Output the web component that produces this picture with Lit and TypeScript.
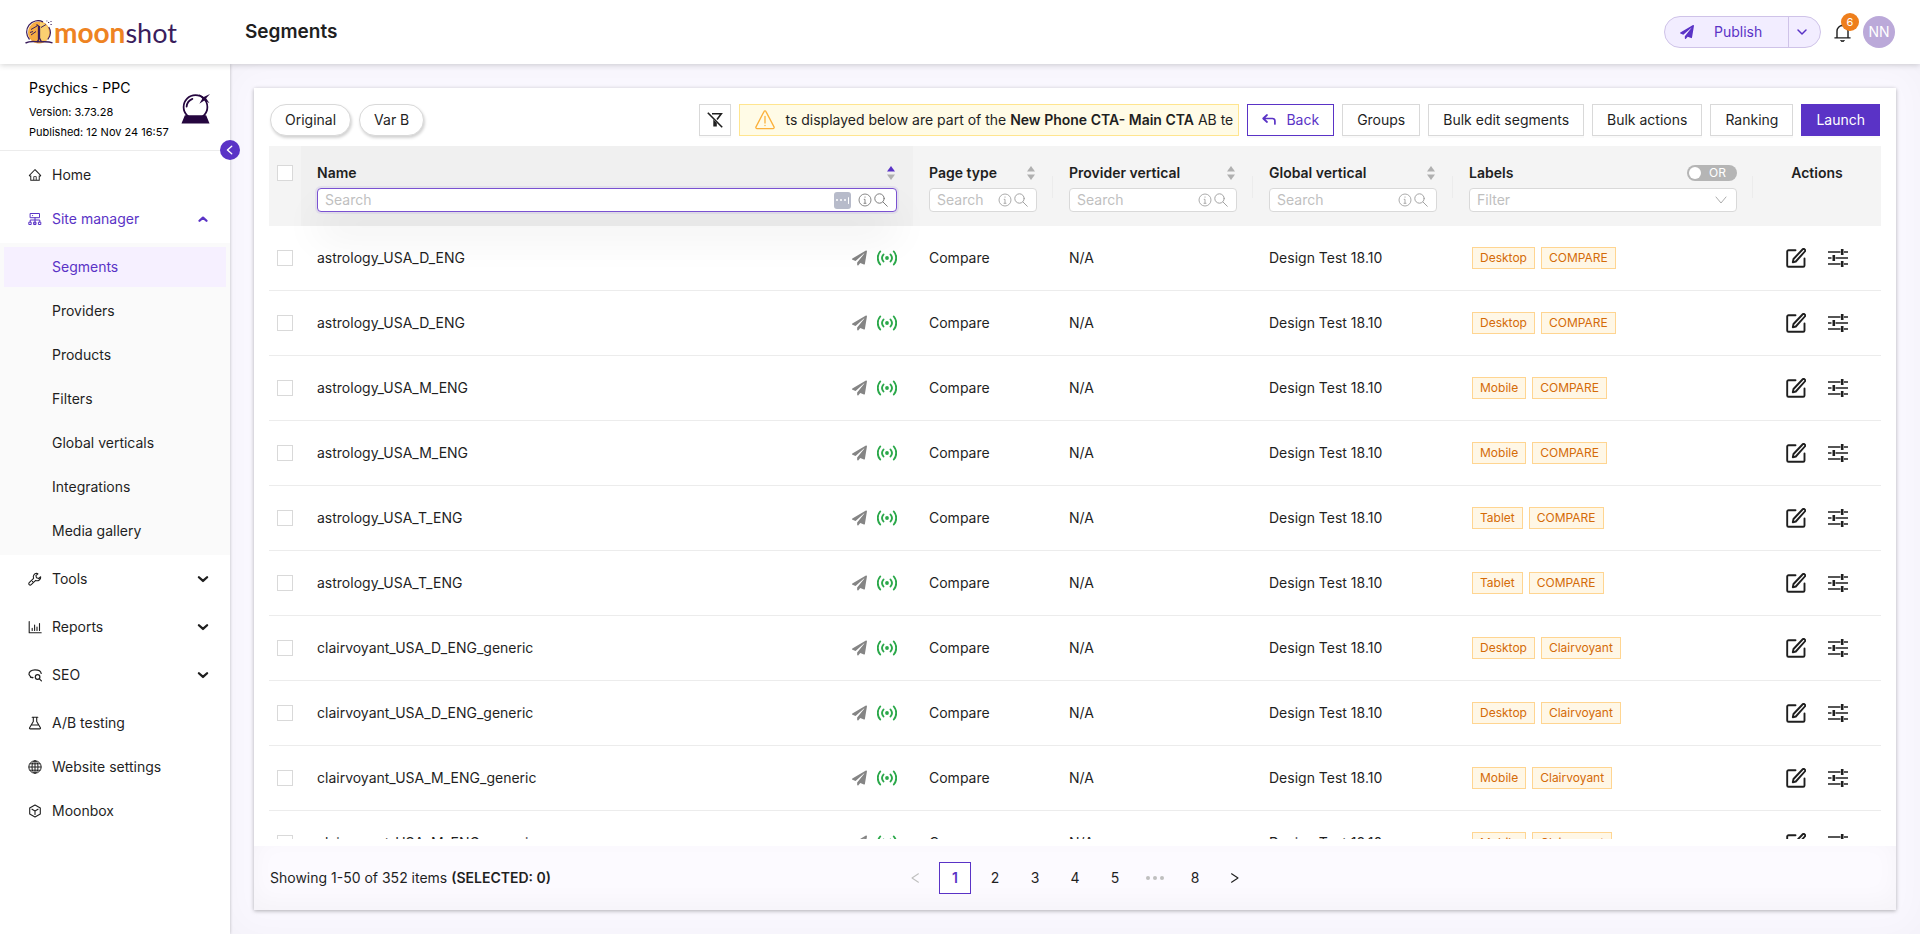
import { LitElement, html, css, nothing, type TemplateResult } from "lit";
import { customElement, state } from "lit/decorators.js";
import { classMap } from "lit/directives/class-map.js";

const stroke = (d: string, w = 2, box = 24) => html`<svg viewBox="0 0 ${box} ${box}" fill="none" stroke="currentColor"
  stroke-width=${w} stroke-linecap="round" stroke-linejoin="round" aria-hidden="true"><path d=${d}></path></svg>`;
const solid = (d: string, box = 24) => html`<svg viewBox="0 0 ${box} ${box}" fill="currentColor" aria-hidden="true"><path d=${d}></path></svg>`;

const icons: Record<string, TemplateResult> = {
  home: solid("M946.5 505L560.1 118.8l-25.9-25.9a31.5 31.5 0 0 0-44.4 0L77.5 505a63.9 63.9 0 0 0-18.8 46c.4 35.2 29.7 63.3 64.9 63.3h42.5V940h691.8V614.3h43.4c17.1 0 33.2-6.7 45.3-18.8a63.6 63.6 0 0 0 18.7-45.3c0-17-6.7-33.1-18.8-45.2zM568 868H456V664h112v204zm217.9-325.7V868H632V640c0-22.1-17.9-40-40-40H432c-22.1 0-40 17.9-40 40v228H238.1V542.3h-96l370-369.7 23.1 23.1L882 542.3h-96.1z", 1024),
  site: stroke("M2.5 1.5h9v4.2h-9zM4.5 3.6h.2M7 5.7v7M2.2 10V8h9.6v2M1.2 10.2h2v2.3h-2zM6 10.2h2v2.3H6zM10.8 10.2h2v2.3h-2z", 1, 14),
  tools: stroke("M8.6 1.3a3.6 3.6 0 0 0-3 5L1.2 10.7a1.3 1.3 0 0 0 2 2L7.7 8.4a3.6 3.6 0 0 0 5-3.7l-2 1.8-2.2-.7-.6-2.2 2-1.8zM4.5 9.500l.2.2", 1.1, 14),
  reports: stroke("M1.2 1.5v11.3h12M4.2 10.5V8.2M6.6 10.5V5M9 10.5V7M11.5 10.5V3.5", 1.1, 14),
  seo: html`<svg viewBox="0 0 14 14" fill="none" stroke="currentColor" stroke-width="1.2" stroke-linecap="round" aria-hidden="true"><path d="M5 9.6 2.8 9 1 6.5C.7 4 3 1.8 7 1.8s6 1.8 6.200 3.7"></path><circle cx="9.6" cy="9" r="2.3"></circle><path d="m11.4 10.8 2 2M2.5 9.2l1.7.6"></path></svg>`,
  flask: stroke("M4.2 1.2h5.6M5.3 1.2v4.3L1.6 11.7c-.3.6 0 1.2.7 1.2h9.4c.7 0 1-.6.7-1.2L8.7 5.5V1.2M3.5 9h6.8", 1.1, 14),
  globe: html`<svg viewBox="0 0 14 14" fill="none" stroke="currentColor" stroke-width="1" aria-hidden="true"><circle cx="7" cy="7" r="6.2"></circle><ellipse cx="7" cy="7" rx="3" ry="6.2"></ellipse><path d="M7 .8v12.4M.8 7h12.4M1.7 3.8h10.6M1.7 10.2h10.6"></path></svg>`,
  cube: stroke("M7 1 12.3 3.9v6.2L7 13 1.7 10.1V3.9zM4 5.2 7 7l3-1.8M7 7v3.500M5.2 2l-3.500 2M8.8 2l3.5 2", 1.1, 14),
  chevDown: stroke("M2.5 4.5 6 7.7l3.5-3.2", 2, 12),
  chevThin: stroke("M2 4 6 8l4-4", 1.5, 12),
  chevUp: stroke("M3 7.5 6 4.8l3 2.7", 2, 12),
  thinDown: stroke("M2 4l5 6 5-6", 0.9, 14),
  left: stroke("M9 2.5 4 7l5 4.5", 1.6, 14),
  plane: solid("M476 3.2L12.5 270.6c-18.1 10.4-15.8 35.6 2.2 43.2L121 358.4l287.3-253.2c5.5-4.9 13.3 2.6 8.6 8.3L176 407v80.5c0 23.6 28.5 32.9 42.5 15.8L282 426l124.6 52.2c14.2 6 30.4-2.9 33-18.2l72-432C515 7.800 493.3-6.8 476 3.2z", 512),
  bell: html`<svg viewBox="0 0 20 20" fill="none" stroke="currentColor" stroke-width="1.5" aria-hidden="true"><path d="M1.5 16.2h17M4.2 16V9a5.8 5.8 0 0 1 11.600 0v7M10 3.2V1.5"></path><path d="M8 18.6a2 1.4 0 0 0 4 0" fill="currentColor" stroke-width="1"></path></svg>`,
  funnelOff: html`<svg viewBox="0 0 16 16" fill="none" stroke="currentColor" stroke-width="1.6" aria-hidden="true"><path d="M5 1.8h9.300L10 7.5"></path><path d="M5.800 7 9.800 11v3.500H6.300V7z" fill="currentColor" stroke="none"></path><path d="M.8.8l14.400 14.400"></path></svg>`,
  warn: html`<svg viewBox="0 0 20 20" fill="none" stroke="currentColor" stroke-width="1.3" stroke-linecap="round" stroke-linejoin="round" aria-hidden="true"><path d="M9 1.600a1.100 1.100 0 0 1 2 0l8 15.300c.4.8 0 1.700-1 1.700H2c-1 0-1.400-.9-1-1.700z"></path><path d="M10 6.500v6.500"></path><path d="M10 15.300v.3"></path></svg>`,
  back: stroke("M5 2 1.2 5.5 5 9M1.5 5.500h9a2.4 2.4 0 0 1 2.4 2.4V11", 1.7, 14),
  info: html`<svg viewBox="0 0 14 14" fill="none" stroke="currentColor" stroke-width="0.9" aria-hidden="true"><circle cx="7" cy="7" r="6"></circle><path d="M7 6.300v4M5.800 6.300h1.200M5.600 10.300h2.800M7 3.500v1.200"></path></svg>`,
  search: html`<svg viewBox="0 0 14 14" fill="none" stroke="currentColor" stroke-width="1" stroke-linecap="round" aria-hidden="true"><circle cx="5.500" cy="5.500" r="4.700"></circle><path d="m9 9 4.300 4.300"></path></svg>`,
  live: html`<svg viewBox="0 0 20 16" fill="none" stroke="currentColor" stroke-width="1.9" stroke-linecap="round" aria-hidden="true"><path d="M3.200 1.500a10 10 0 0 0 0 13M16.800 1.500a10 10 0 0 1 0 13M6.500 4.500a5.400 5.400 0 0 0 0 7M13.500 4.500a5.400 5.400 0 0 1 0 7"></path><circle cx="10" cy="8" r="1.9" fill="currentColor" stroke="none"></circle></svg>`,
  edit: stroke("M9.500 2.200H2.500a1.300 1.300 0 0 0-1.300 1.300v14a1.300 1.300 0 0 0 1.300 1.300h14.700a1.300 1.300 0 0 0 1.300-1.300V10.500M16.500 1.500a1.500 1.500 0 0 1 2.300 2L9.800 13.500 6.800 14.300 7.500 11z", 1.9, 20),
  sliders: html`<svg viewBox="0 0 20 20" fill="none" stroke="currentColor" stroke-width="1.600" aria-hidden="true"><path d="M0 4h12.500M16 4h4M0 10h3.500M7.500 10H20M0 16h12.500M16 16h4"></path><path d="M14.200 1v6M5.800 7v6M14.200 13v6" stroke-width="2.600"></path></svg>`,
  pagePrev: stroke("M11 2 3.500 7l7.500 5", 1.2, 14),
  pageNext: stroke("M3 2l7.500 5L3 12", 1.3, 14),
  ball: html`<svg viewBox="0 0 30 32" aria-hidden="true"><circle cx="15" cy="14" r="12.300" fill="#fff" stroke="#25063f" stroke-width="1.800"></circle><path d="M5.800 13.500a9.500 9.500 0 0 1 6-8" fill="none" stroke="#25063f" stroke-width="1.800" stroke-linecap="round"></path><path d="M4 22.500h22L29.500 31H.5z" fill="#25063f"></path><path d="m18.500.5 5 3L30 .5l-4 4.500 3.500 5-5-3-5.500 3.500 3-5z" fill="#25063f"></path></svg>`,
  moon: html`<svg viewBox="0 0 28 24" aria-hidden="true"><circle cx="14" cy="12.500" r="11" fill="#f6ac42"></circle><path d="M15 2a11 11 0 0 1 6 18.500h-6z" fill="#fbd071"></path><path d="M4.500 19.500A11.300 11.300 0 0 1 18 1.900M23.800 7a11.300 11.300 0 0 1-1 12.500" fill="none" stroke="#3a1d5c" stroke-width="1.200"></path><path d="M11.500 4.500 13.500 6v14L12 22M14.500 6v12l2 4" fill="none" stroke="#3a1d5c" stroke-width="1.300"></path><path d="M6 9.500l6-3.500M6 15l5-3.500M16 7.500l5-3M5 12.500l3-1" fill="none" stroke="#3a1d5c" stroke-width="1"></path><path d="M.5 23c5-2.500 8-1.500 13-1.200s9-.8 14 1" fill="none" stroke="#3a1d5c" stroke-width="1.400"></path><path d="M23 2.500h1.200M26 1v1M25.500 4.500h1.200M21.500 1h.8" stroke="#3a1d5c" stroke-width="1"></path></svg>`,
};

@customElement("top-bar")
class TopBar extends LitElement {
  static styles = css`
    :host { display: flex; align-items: center; height: 64px; flex: none; background: #fff; box-shadow: 0 1px 6px rgba(0, 0, 0, .18); position: relative; z-index: 3; }
    .brand { display: flex; align-items: center; gap: 1px; width: 245px; box-sizing: border-box; padding-left: 25px; text-decoration: none; font: 28px/32px Lato, sans-serif; color: #3a1d5c; }
    .brand svg { width: 28px; height: 24px; }
    .brand b { color: #ee8322; font-weight: 700; }
    .brand i { font-style: normal; font-size: 27px; }
    h1 { flex: 1; margin: 0; font-size: 19px; line-height: 28px; font-weight: 600; }
    .publish { display: flex; height: 32px; box-sizing: border-box; border: 1px solid #cfc3e8; border-radius: 16px; background: #f2edff; overflow: hidden; }
    button { font: inherit; color: #5a33c6; background: none; border: 0; padding: 0; cursor: pointer; display: flex; align-items: center; }
    .main { width: 123px; padding-left: 15px; gap: 20px; }
    .main svg { width: 14px; height: 14px; }
    .more { width: 32px; padding-right: 5px; justify-content: center; border-left: 1px solid #cfc3e8; }
    .more svg { width: 12px; height: 12px; }
    .bell { position: relative; margin-left: 12px; color: #1f1f1f; }
    .bell svg { width: 19px; height: 20px; }
    .count { position: absolute; top: -9px; right: -7px; width: 18px; height: 18px; border-radius: 9px; background: #ee7f1d; color: #fff; font-size: 11px; line-height: 18px; text-align: center; }
    .avatar { width: 32px; height: 32px; margin: 0 25px 0 11px; border-radius: 50%; background: #bba9d9; color: #fff; justify-content: center; }
  `;
  render() {
    return html`
      <a class="brand" href="#" aria-label="moonshot">${icons.moon}<span><b>moon</b><i>shot</i></span></a>
      <h1>Segments</h1>
      <div class="publish">
        <button class="main">${icons.plane}<span>Publish</span></button>
        <button class="more" aria-label="More publish options">${icons.chevThin}</button>
      </div>
      <button class="bell" aria-label="Notifications">${icons.bell}<span class="count">6</span></button>
      <button class="avatar">NN</button>`;
  }
}

interface NavItem { label: string; icon: string; group?: boolean; open?: boolean; children?: string[] }

const nav: NavItem[] = [
  { label: "Home", icon: "home" },
  { label: "Site manager", icon: "site", group: true, open: true, children: ["Segments", "Providers", "Products", "Filters", "Global verticals", "Integrations", "Media gallery"] },
  { label: "Tools", icon: "tools", group: true },
  { label: "Reports", icon: "reports", group: true },
  { label: "SEO", icon: "seo", group: true },
  { label: "A/B testing", icon: "flask" },
  { label: "Website settings", icon: "globe" },
  { label: "Moonbox", icon: "cube" },
];

@customElement("side-nav")
class SideNav extends LitElement {
  static styles = css`
    :host { display: block; width: 230px; flex: none; box-sizing: border-box; background: #fff; position: relative; z-index: 2; box-shadow: 0 0 3px rgba(0, 0, 0, .25); }
    .site { display: flex; align-items: center; justify-content: space-between; height: 87px; box-sizing: border-box; padding: 4px 20px 0 29px; border-bottom: 1px solid #ececec; color: #000; }
    .site h2 { margin: 2px 0 4px; font-size: 14px; line-height: 20px; font-weight: 400; }
    .site p { margin: 0; font-size: 11px; line-height: 20px; }
    .site svg { width: 29px; height: 32px; }
    .fold { position: absolute; top: 76px; right: -10px; width: 20px; height: 20px; border: 0; padding: 0; border-radius: 50%; background: #5a33c6; color: #fff; display: grid; place-items: center; cursor: pointer; }
    .fold svg { width: 12px; height: 12px; }
    nav { display: flex; flex-direction: column; gap: 4px; padding-top: 4px; }
    a { display: flex; align-items: center; height: 40px; box-sizing: border-box; padding: 0 20px 0 28px; color: #1f1f1f; text-decoration: none; }
    a svg { width: 14px; height: 14px; margin-right: 10px; }
    a .arrow { margin-left: auto; display: flex; }
    .arrow svg { width: 14px; height: 14px; margin: 0; }
    .closed { margin-bottom: 4px; }
    .open { color: #5a33c6; }
    .sub { display: flex; flex-direction: column; gap: 4px; padding: 4px; background: #fafafa; }
    .sub a { padding: 0 48px; }
    .sub .current { background: #f6f0ff; color: #5a33c6; }
  `;
  render() {
    return html`
      <div class="site">
        <div><h2>Psychics - PPC</h2><p>Version: 3.73.28</p><p>Published: 12 Nov 24 16:57</p></div>
        ${icons.ball}
      </div>
      <button class="fold" aria-label="Collapse menu">${icons.left}</button>
      <nav>${nav.map((n) => html`
        <a href="#" class=${classMap({ closed: !!n.group && !n.open, open: !!n.open })}>${icons[n.icon]}${n.label}
          ${n.group ? html`<span class="arrow">${n.open ? icons.chevUp : icons.chevDown}</span>` : nothing}</a>
        ${n.children ? html`<div class="sub">${n.children.map((c, i) => html`<a href="#" class=${i === 0 ? "current" : ""}>${c}</a>`)}</div>` : nothing}`)}
      </nav>`;
  }
}

const columns = [
  { label: "Name", cls: "name" },
  { label: "Page type", cls: "type" },
  { label: "Provider vertical", cls: "provider" },
  { label: "Global vertical", cls: "global" },
];

const rows: { name: string; labels: string[] }[] = [
  { name: "astrology_USA_D_ENG", labels: ["Desktop", "COMPARE"] },
  { name: "astrology_USA_D_ENG", labels: ["Desktop", "COMPARE"] },
  { name: "astrology_USA_M_ENG", labels: ["Mobile", "COMPARE"] },
  { name: "astrology_USA_M_ENG", labels: ["Mobile", "COMPARE"] },
  { name: "astrology_USA_T_ENG", labels: ["Tablet", "COMPARE"] },
  { name: "astrology_USA_T_ENG", labels: ["Tablet", "COMPARE"] },
  { name: "clairvoyant_USA_D_ENG_generic", labels: ["Desktop", "Clairvoyant"] },
  { name: "clairvoyant_USA_D_ENG_generic", labels: ["Desktop", "Clairvoyant"] },
  { name: "clairvoyant_USA_M_ENG_generic", labels: ["Mobile", "Clairvoyant"] },
  { name: "clairvoyant_USA_M_ENG_generic", labels: ["Mobile", "Clairvoyant"] },
];

@customElement("segment-table")
class SegmentTable extends LitElement {
  static styles = css`
    :host { display: block; flex: 1; min-height: 0; overflow: hidden; }
    table { width: 100%; border-collapse: separate; border-spacing: 0; table-layout: fixed; }
    .c-check { width: 32px; }
    .c-type { width: 140px; }
    .c-vertical { width: 200px; }
    .c-labels { width: 300px; }
    .c-actions { width: 128px; }
    th { height: 80px; box-sizing: border-box; padding: 16px 16px 14px; background: #f4f4f4; text-align: left; vertical-align: top; font-weight: 600; position: relative; }
    th.sorted { background: #f0f0f0; z-index: 1; }
    th.divided::after { content: ""; position: absolute; right: 0; top: 30px; width: 1px; height: 22px; background: #ececec; }
    th.pick, td.pick { padding-left: 8px; padding-right: 8px; }
    th.pick { padding-top: 19px; }
    th.act { text-align: center; }
    .head { display: flex; align-items: center; justify-content: space-between; height: 22px; margin-bottom: 4px; }
    .sort { display: flex; width: 12px; padding: 0; border: 0; background: none; color: #b0b0b0; cursor: pointer; }
    .sort svg { width: 12px; height: 16px; }
    .asc .up { color: #5a33c6; fill: #5a33c6; }
    .field { display: flex; align-items: center; gap: 2px; height: 24px; box-sizing: border-box; padding: 0 8px 0 7px; border: 1px solid #d9d9d9; border-radius: 4px; background: #fff; color: #a3a3a3; }
    .field input { flex: 1; min-width: 0; width: 0; padding: 0; border: 0; outline: 0; background: none; font: inherit; font-weight: 400; color: #1f1f1f; }
    .field input::placeholder { color: #bfbfbf; opacity: 1; }
    .field svg { width: 14px; height: 14px; flex: none; }
    .field.active { color: #7d7d7d; border-color: #7a52d1; box-shadow: 0 0 0 2px rgba(90, 51, 198, .08), 0 24px 40px rgba(0, 0, 0, .07); }
    .dots { display: flex; align-items: center; justify-content: center; gap: 2px; width: 17px; height: 17px; margin-right: 5px; border-radius: 3px; background: #b7bbca; }
    .dots i { width: 2px; height: 2px; border-radius: 1px; background: #fff; }
    .dots i:last-child { width: 1px; height: 7px; }
    .field select { flex: 1; appearance: none; border: 0; outline: 0; background: none; padding: 0; font: inherit; font-weight: 400; color: #bfbfbf; }
    .switch { display: flex; align-items: center; gap: 8px; width: 50px; height: 16px; box-sizing: border-box; padding-left: 2px; border-radius: 8px; background: #b5b5b5; color: #fff; font-size: 12px; line-height: 16px; font-weight: 400; cursor: pointer; }
    .switch input { appearance: none; width: 12px; height: 12px; margin: 0; border-radius: 50%; background: #fff; }
    .box { appearance: none; display: block; width: 16px; height: 16px; box-sizing: border-box; margin: 0; border: 1px solid #d9d9d9; background: #fff; }
    td { height: 65px; box-sizing: border-box; padding: 0 16px; border-bottom: 1px solid #ececec; }
    .cell { display: flex; align-items: center; }
    .title { flex: 1; }
    .state { display: flex; }
    .plane { color: #858585; margin-right: 10px; }
    .plane svg { width: 15px; height: 16px; }
    .live { color: #2ba84a; }
    .live svg { width: 20px; height: 16px; }
    .tags { display: flex; gap: 6px; padding-left: 3px; }
    .tag { padding: 0 7px; border: 1px solid #ffd591; background: #fff7e6; color: #d46b08; font-size: 12px; line-height: 20px; }
    .tools { display: flex; justify-content: center; gap: 22px; }
    .tools button { display: flex; padding: 0; border: 0; background: none; color: #1f1f1f; cursor: pointer; }
    .tools svg { width: 20px; height: 20px; }
  `;
  render() {
    return html`<table>
      <colgroup><col class="c-check"><col><col class="c-type"><col class="c-vertical"><col class="c-vertical"><col class="c-labels"><col class="c-actions"></colgroup>
      <thead><tr>
        <th class="pick"><input class="box" type="checkbox" aria-label="Select all"></th>
        ${columns.map((c, i) => html`<th class=${i === 0 ? "sorted" : "divided"}>
          <div class="head"><label for=${c.cls}>${c.label}</label>
            <button class="sort ${i === 0 ? "asc" : ""}" aria-label="Sort by ${c.label}">
              <svg viewBox="0 0 12 16" fill="currentColor"><path class="up" d="M6 1 10 6.500H2z"></path><path d="M6 15 10 9.500H2z"></path></svg>
            </button></div>
          <div class="field ${i === 0 ? "active" : ""}"><input id=${c.cls} placeholder="Search">
            ${i === 0 ? html`<span class="dots"><i></i><i></i><i></i><i></i></span>` : nothing}${icons.info}${icons.search}</div>
        </th>`)}
        <th class="divided">
          <div class="head"><label for="labels">Labels</label><label class="switch"><input type="checkbox" role="switch"><span>OR</span></label></div>
          <div class="field"><select id="labels"><option>Filter</option></select>${icons.thinDown}</div>
        </th>
        <th class="act"><div>Actions</div></th>
      </tr></thead>
      <tbody>${rows.map((r) => html`<tr>
        <td class="pick"><input class="box" type="checkbox" aria-label="Select ${r.name}"></td>
        <td><div class="cell"><span class="title">${r.name}</span><span class="state plane">${icons.plane}</span><span class="state live">${icons.live}</span></div></td>
        <td>Compare</td><td>N/A</td><td>Design Test 18.10</td>
        <td><div class="tags">${r.labels.map((l) => html`<span class="tag">${l}</span>`)}</div></td>
        <td><div class="tools"><button aria-label="Edit">${icons.edit}</button><button aria-label="Configure">${icons.sliders}</button></div></td>
      </tr>`)}</tbody>
    </table>`;
  }
}

@customElement("app-root")
class AppRoot extends LitElement {
  static styles = css`
    :host { display: flex; flex-direction: column; height: 100vh; overflow: hidden; font: 14px/22px Inter, "Liberation Sans", sans-serif; color: #1f1f1f; }
    .body { display: flex; flex: 1; min-height: 0; }
    main { flex: 1; min-width: 0; padding: 24px; display: flex; background: #faf8ff; box-shadow: inset 0 0 40px rgba(0, 0, 0, .03); }
    .card { flex: 1; min-width: 0; display: flex; flex-direction: column; background: #fff; box-shadow: 0 1px 4px rgba(0, 0, 0, .3); }
    .bar { display: flex; gap: 8px; padding: 16px 16px 10px; }
    button { font: inherit; color: inherit; cursor: pointer; height: 32px; box-sizing: border-box; padding: 0 14px; border: 1px solid #d9d9d9; background: #fff; box-shadow: 0 2px 0 rgba(0, 0, 0, .02); white-space: nowrap; }
    .pill { border-radius: 16px; box-shadow: 1px 2px 3px rgba(0, 0, 0, .18); }
    .icon { margin-left: auto; width: 32px; padding: 0; display: grid; place-items: center; }
    .icon svg { width: 16px; height: 16px; }
    .alert { display: flex; align-items: center; gap: 10px; width: 500px; height: 32px; box-sizing: border-box; padding: 0 2px 0 15px; border: 1px solid #ffe58f; background: #fffbe6; }
    .alert svg { width: 20px; height: 20px; flex: none; color: #fbb03b; }
    .alert span { flex: 1; overflow: hidden; white-space: nowrap; }
    .alert b { font-weight: 600; }
    .back { display: flex; align-items: center; gap: 10px; border-color: #5a33c6; color: #5a33c6; }
    .back svg { width: 14px; height: 14px; }
    .primary { background: #5a33c6; border-color: #5a33c6; color: #fff; }
    segment-table { margin: 0 15px 7px; }
    footer { display: grid; grid-template-columns: 1fr auto 1fr; align-items: center; height: 64px; box-sizing: border-box; padding: 0 16px; background: #fcfaff; box-shadow: inset 0 -8px 24px rgba(0, 0, 0, .03); }
    footer b { font-weight: 600; }
    .pages { display: flex; gap: 8px; }
    .pages button, .pages span { width: 32px; height: 32px; padding: 0; border: 0; background: none; box-shadow: none; display: grid; place-items: center; }
    .pages svg { width: 12px; height: 14px; }
    .pages .on { border: 1px solid #5a33c6; color: #5a33c6; background: #fff; font-weight: 600; }
    .pages .off, .pages .gap { color: #bfbfbf; }
    .pages .gap svg { width: 18px; height: 4px; }
  `;
  @state() private page = 1;
  render() {
    const pageButton = (n: number) => html`<button class=${n === this.page ? "on" : ""} @click=${() => (this.page = n)}>${n}</button>`;
    return html`
      <top-bar></top-bar>
      <div class="body">
        <side-nav></side-nav>
        <main><section class="card">
          <div class="bar">
            <button class="pill">Original</button><button class="pill">Var B</button>
            <button class="icon" aria-label="Clear filters">${icons.funnelOff}</button>
            <div class="alert" role="status">${icons.warn}<span>ts displayed below are part of the <b>New Phone CTA- Main CTA</b> AB te</span></div>
            <button class="back">${icons.back}Back</button>
            <button>Groups</button><button>Bulk edit segments</button><button>Bulk actions</button><button>Ranking</button><button class="primary">Launch</button>
          </div>
          <segment-table></segment-table>
          <footer>
            <div>Showing 1-50 of 352 items <b>(SELECTED: 0)</b></div>
            <div class="pages">
              <button class="off" disabled aria-label="Previous page">${icons.pagePrev}</button>
              ${[1, 2, 3, 4, 5].map(pageButton)}
              <span class="gap"><svg viewBox="0 0 18 4" fill="currentColor" aria-hidden="true"><circle cx="2" cy="2" r="2"></circle><circle cx="9" cy="2" r="2"></circle><circle cx="16" cy="2" r="2"></circle></svg></span>
              ${pageButton(8)}
              <button aria-label="Next page">${icons.pageNext}</button>
            </div>
          </footer>
        </section></main>
      </div>`;
  }
}
